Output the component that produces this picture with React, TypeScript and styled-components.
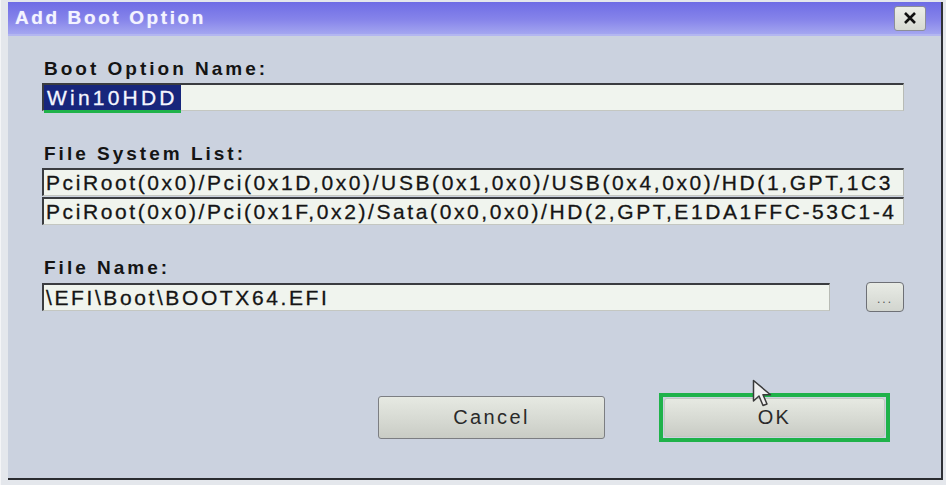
import styled, { createGlobalStyle } from 'styled-components';

const GlobalStyle = createGlobalStyle`
  html, body {
    margin: 0;
    padding: 0;
  }
  body {
    width: 946px;
    height: 485px;
    overflow: hidden;
    background: #e4e7ec;
    font-family: 'Liberation Sans', Arial, sans-serif;
  }
`;

const fileSystems = [
  'PciRoot(0x0)/Pci(0x1D,0x0)/USB(0x1,0x0)/USB(0x4,0x0)/HD(1,GPT,1C3',
  'PciRoot(0x0)/Pci(0x1F,0x2)/Sata(0x0,0x0)/HD(2,GPT,E1DA1FFC-53C1-4',
];

export default function App() {
  return (
    <>
      <GlobalStyle />
      <Screen>
        <Dialog>
          <TitleBar>
            <Title>Add Boot Option</Title>
            <CloseButton>
              <svg width='14' height='12' viewBox='0 0 14 12'>
                <path d='M2 1 L12 11 M12 1 L2 11' stroke='#111' strokeWidth='2.6' />
              </svg>
            </CloseButton>
          </TitleBar>

          <Body>
            <Field>
              <Label>Boot Option Name:</Label>
              <TextBox>
                <Selected>Win10HDD</Selected>
              </TextBox>
            </Field>

            <Field $top={32}>
              <Label>File System List:</Label>
              <List>
                {fileSystems.map((fs) => (
                  <TextBox key={fs}>{fs}</TextBox>
                ))}
              </List>
            </Field>

            <Field $top={32}>
              <Label>File Name:</Label>
              <FileRow>
                <TextBox $width={788}>\EFI\Boot\BOOTX64.EFI</TextBox>
                <BrowseButton>...</BrowseButton>
              </FileRow>
            </Field>

            <ButtonRow>
              <DialogButton $border>Cancel</DialogButton>
              <Highlight>
                <DialogButton $width={221} $height={39}>
                  OK
                </DialogButton>
              </Highlight>
            </ButtonRow>
          </Body>

          {/* mouse pointer over the OK button */}
          <Pointer width='24' height='30' viewBox='0 0 24 30'>
            <path
              d='M1.5 1.5 L1.5 22 L7 17 L11 26.5 L15 25 L11 15.8 L18.5 15.8 Z'
              fill='#efefef'
              stroke='#3a3a3a'
              strokeWidth='1.5'
              strokeLinejoin='round'
            />
          </Pointer>
        </Dialog>
      </Screen>
    </>
  );
}

const Screen = styled.div`
  height: 485px;
  padding: 2px 0 0 7px;
  box-sizing: border-box;
  border-left: 1px solid #f4f5f7;
`;

const Dialog = styled.div`
  position: relative;
  width: 935px;
  height: 478px;
  box-sizing: border-box;
  display: flex;
  flex-direction: column;
  background: #cbd2df;
  border-right: 2px solid #2e3036;
  border-bottom: 2px solid #2a2c30;
`;

const TitleBar = styled.div`
  height: 34px;
  box-sizing: border-box;
  display: flex;
  align-items: center;
  justify-content: space-between;
  padding: 0 15px 0 7px;
  background: linear-gradient(#6e6ce5, #8684ea 55%, #a4a6f0);
  border-bottom: 2px solid #b3b6f0;
`;

const Title = styled.span`
  font-size: 19px;
  font-weight: bold;
  letter-spacing: 2.6px;
  color: #f3f3ff;
  text-shadow: 0 0 1px #c8c8f4;
`;

const CloseButton = styled.div`
  width: 32px;
  height: 25px;
  box-sizing: border-box;
  display: flex;
  align-items: center;
  justify-content: center;
  border: 1px solid #8c8e98;
  border-radius: 3px;
  background: linear-gradient(#eceee8, #d6d9d2);
`;

const Body = styled.div`
  flex: 1;
  display: flex;
  flex-direction: column;
  padding: 22px 37px 0 34px;
`;

const Field = styled.div<{ $top?: number }>`
  display: flex;
  flex-direction: column;
  gap: 3px;
  margin-top: ${(p) => p.$top ?? 0}px;
`;

const Label = styled.div`
  height: 22px;
  line-height: 22px;
  padding-left: 2px;
  font-size: 19px;
  font-weight: bold;
  letter-spacing: 3px;
  color: #141414;
`;

const TextBox = styled.div<{ $width?: number }>`
  width: ${(p) => (p.$width ? `${p.$width}px` : 'auto')};
  height: 28px;
  box-sizing: border-box;
  display: flex;
  align-items: stretch;
  white-space: nowrap;
  padding-left: 2px;
  line-height: 26px;
  font-size: 21px;
  letter-spacing: 2.6px;
  color: #151515;
  -webkit-text-stroke: 0.3px #151515;
  background: #f0f4ee;
  border-top: 2px solid #3a3c40;
  border-left: 2px solid #3a3c40;
  border-right: 1px solid #b8bbb5;
  border-bottom: 1px solid #c4c7c1;
`;

const Selected = styled.span`
  position: relative;
  margin-left: -2px;
  padding: 0 3px 0 3px;
  letter-spacing: 3.2px;
  color: #f4f6ff;
  -webkit-text-stroke: 0.3px #f4f6ff;
  background: #17267c;
  &::after {
    content: '';
    position: absolute;
    left: 0;
    right: 0;
    bottom: -3px;
    height: 3px;
    background: #1fb24a;
  }
`;

const List = styled.div`
  display: flex;
  flex-direction: column;
  gap: 1px;
`;

const FileRow = styled.div`
  display: flex;
  align-items: center;
  justify-content: space-between;
`;

const BrowseButton = styled.div`
  width: 38px;
  height: 30px;
  box-sizing: border-box;
  display: flex;
  align-items: flex-end;
  justify-content: center;
  padding-bottom: 6px;
  font-size: 12px;
  line-height: 12px;
  letter-spacing: 2px;
  color: #555;
  border: 1px solid #6e7076;
  border-radius: 4px;
  background: linear-gradient(#e8ebe5, #d2d5cf);
`;

const ButtonRow = styled.div`
  margin-top: auto;
  display: flex;
  align-items: center;
  justify-content: flex-end;
  gap: 54px;
  padding: 0 14px 36px 0;
`;

const DialogButton = styled.div<{ $width?: number; $height?: number; $border?: boolean }>`
  width: ${(p) => p.$width ?? 227}px;
  height: ${(p) => p.$height ?? 43}px;
  box-sizing: border-box;
  display: flex;
  align-items: center;
  justify-content: center;
  font-size: 20px;
  letter-spacing: 2.4px;
  color: #2a2a2a;
  border: 1px solid ${(p) => (p.$border ? '#7c7e82' : '#c4c7c0')};
  border-radius: 3px;
  background: linear-gradient(#e6e9e2, #d8dbd4 50%, #c9ccc5);
`;

const Highlight = styled.div`
  padding: 1px;
  border: 4px solid #1fb24a;
  display: flex;
`;

const Pointer = styled.svg`
  position: absolute;
  left: 744px;
  top: 377px;
`;
